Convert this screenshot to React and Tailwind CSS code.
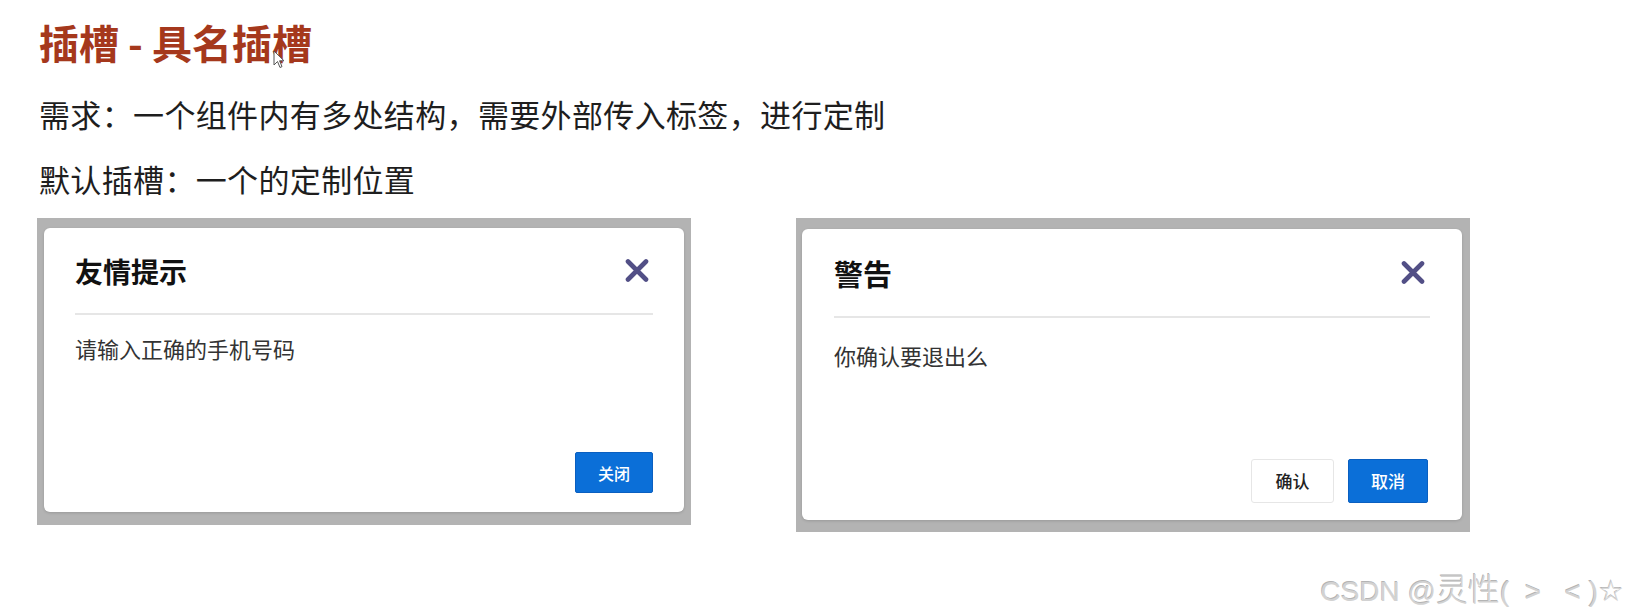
import React from "react";

const FONT = { fontFamily: '"Noto Sans CJK SC", "Noto Sans", sans-serif' };
const LATIN = { fontFamily: '"Liberation Sans", Arial, sans-serif' };

function CloseIcon() {
  return (
    <svg width="24" height="23" viewBox="0 0 24 23" className="shrink-0">
      <path d="M3 2.5 L21 20.5 M21 2.5 L3 20.5" stroke="#524f86" strokeWidth="4.6" strokeLinecap="round" fill="none" />
    </svg>
  );
}

export default function App() {
  return (
    <div className="relative w-[1629px] h-[615px] bg-white overflow-hidden text-[#222]" style={FONT}>
      <div className="flex flex-col pl-[39px] pt-[18px]">
        <h1 className="text-[40px] leading-[48px] font-bold text-[#a5381c] whitespace-pre">插槽 - 具名插槽</h1>
        <p className="mt-[28px] text-[31px] leading-[40px] tracking-[0.35px] text-[#1e1e1e]">需求：一个组件内有多处结构，需要外部传入标签，进行定制</p>
        <p className="mt-[25px] text-[31px] leading-[40px] tracking-[0.35px] text-[#1e1e1e]">默认插槽：一个的定制位置</p>

        <div className="mt-[19px] flex items-start gap-[105px] -ml-[2px]">
          {/* left dialog */}
          <div className="w-[654px] h-[307px] bg-[#b3b3b3] pt-[10px] pl-[7px] pr-[7px] pb-[13px]">
            <div className="h-full bg-white rounded-[6px] shadow-[0_1px_3px_rgba(0,0,0,0.15)] flex flex-col px-[31px] pb-[19px]">
              <div className="h-[87px] flex items-center justify-between border-b-2 border-[#e6e6e6]">
                <span className="text-[28px] leading-[36px] font-bold text-[#111]">友情提示</span>
                <div className="mr-[4px]"><CloseIcon /></div>
              </div>
              <p className="pt-[18px] text-[22px] leading-[30px] text-[#333]">请输入正确的手机号码</p>
              <div className="flex-1" />
              <div className="flex justify-end">
                <button className="w-[78px] h-[41px] bg-[#0b6fd8] border border-[#0a5fc0] rounded-[2px] text-white text-[16px] font-medium">关闭</button>
              </div>
            </div>
          </div>

          {/* right dialog */}
          <div className="w-[674px] h-[314px] bg-[#b3b3b3] pt-[11px] pl-[6px] pr-[8px] pb-[12px]">
            <div className="h-full bg-white rounded-[6px] shadow-[0_1px_3px_rgba(0,0,0,0.15)] flex flex-col pl-[32px] pr-[32px] pb-[17px]">
              <div className="h-[89px] flex items-center justify-between border-b-2 border-[#e6e6e6]">
                <span className="text-[29px] leading-[38px] font-bold text-[#111]">警告</span>
                <div className="mr-[5px]"><CloseIcon /></div>
              </div>
              <p className="pt-[22px] text-[22px] leading-[30px] text-[#333]">你确认要退出么</p>
              <div className="flex-1" />
              <div className="flex justify-end gap-[14px] pr-[2px]">
                <button className="w-[83px] h-[44px] bg-white border border-[#e6e6e6] rounded-[3px] text-[#222] text-[17px] font-medium">确认</button>
                <button className="w-[80px] h-[44px] bg-[#0b6fd8] border border-[#0a5fc0] rounded-[2px] text-white text-[17px] font-medium">取消</button>
              </div>
            </div>
          </div>
        </div>
      </div>

      {/* mouse cursor */}
      <svg className="absolute left-[273px] top-[50px]" width="12" height="19" viewBox="0 0 12 19">
        <path d="M1 1 L1 15 L4.5 11.5 L7 17.5 L9 16.6 L6.6 10.8 L11 10.8 Z" fill="white" stroke="#555" strokeWidth="1" strokeLinejoin="round" />
      </svg>

      {/* watermark */}
      <div
        className="absolute right-[5px] top-[569px] leading-[36px] text-[#d2d2d2] whitespace-pre flex items-baseline"
        style={{ textShadow: "0.6px 0.6px 0 #ffffff, -0.6px -0.6px 0 #b4b4b4" }}
      >
        <span className="text-[28px]" style={LATIN}>CSDN @</span>
        <span className="text-[32px] font-light" style={FONT}>灵性</span>
        <span className="text-[28px]" style={LATIN}>(  &gt;   &lt; )</span>
        <span className="text-[29px]" style={{ fontFamily: '"DejaVu Sans", sans-serif' }}>☆</span>
      </div>
    </div>
  );
}
